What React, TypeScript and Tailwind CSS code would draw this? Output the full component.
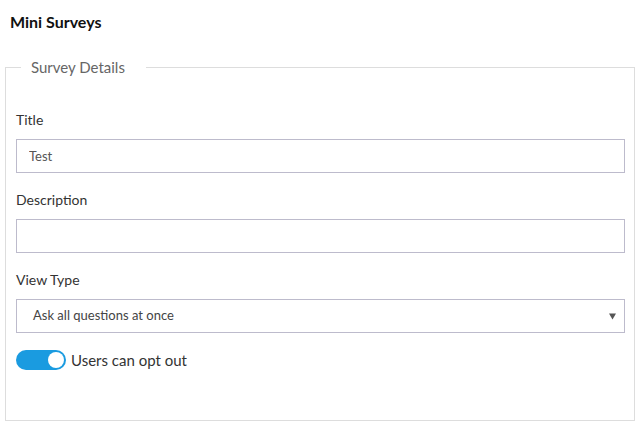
import React, { useState } from 'react';

const font = { fontFamily: '"Lato", "Open Sans", sans-serif' };

const Field: React.FC<{ label: string; children: React.ReactNode }> = ({ label, children }) => (
  <div className="mb-[17px]">
    <label className="block text-[14px] leading-[20px] text-[#333] mb-[9px]">{label}</label>
    {children}
  </div>
);

export default function App() {
  const [optOut, setOptOut] = useState(true);

  return (
    <div className="w-[642px] h-[432px] bg-white" style={font}>
      <h1 className="pl-[10px] pt-[12px] text-[16px] leading-[20px] font-bold text-[#111]">Mini Surveys</h1>
      <fieldset className="ml-[5px] mt-[25px] w-[630px] h-[364px] border border-[#ddd] pl-[10px] pr-[9px]">
        <legend className="ml-[5px] pl-[10px] pr-[21px] text-[15px] leading-[20px] text-[#666]">Survey Details</legend>
        <div className="pt-[33px]">
          <Field label="Title">
            <input
              defaultValue="Test"
              className="block w-full h-[34px] border border-[#bdbbcc] px-[12px] text-[13px] text-[#555] outline-none"
            />
          </Field>
          <Field label="Description">
            <input className="block w-full h-[34px] border border-[#bdbbcc] px-[12px] text-[13px] text-[#555] outline-none" />
          </Field>
          <Field label="View Type">
            <div className="relative h-[34px] border border-[#bdbbcc] flex items-center px-[16px]">
              <span className="text-[13px] text-[#444]">Ask all questions at once</span>
              <svg className="absolute right-[8px] top-[13px]" width="7" height="7" viewBox="0 0 7 7">
                <path d="M0 0.5h7L3.5 6.5z" fill="#555" />
              </svg>
            </div>
          </Field>
          <div className="flex items-center h-[20px] gap-[5px]">
            <button
              onClick={() => setOptOut(!optOut)}
              className={`relative w-[50px] h-[20px] rounded-full ${optOut ? 'bg-[#1a9be0]' : 'bg-[#ccc]'}`}
            >
              <span
                className={`absolute top-[2px] w-[16px] h-[16px] rounded-full bg-white ${optOut ? 'right-[2px]' : 'left-[2px]'}`}
              />
            </button>
            <span className="text-[15px] leading-[20px] text-[#333]">Users can opt out</span>
          </div>
        </div>
      </fieldset>
    </div>
  );
}
